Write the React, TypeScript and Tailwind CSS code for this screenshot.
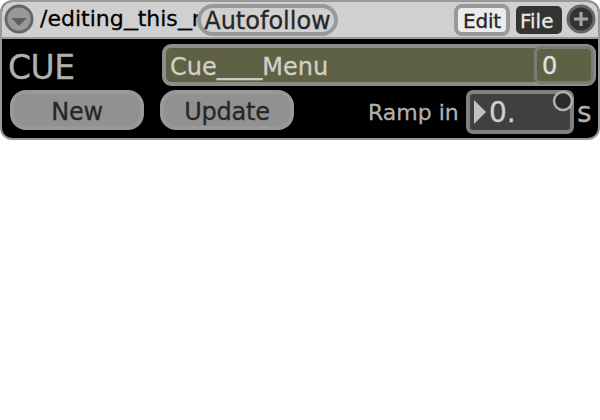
import React from 'react';

function WideUnderscore({ className }: { className: string }) {
  return <span className={`inline-block origin-left scale-x-[1.27] ${className}`}>_</span>;
}

function Header() {
  return (
    <header className="flex h-[37px] shrink-0 items-start border-b-2 border-[#999999] bg-[#d0d0d0] pt-[2px]">
      <svg className="ml-[2px] h-[30px] w-[30px] shrink-0" viewBox="0 0 30 30">
        <circle cx="15" cy="15" r="13" fill="#999999" stroke="#666666" strokeWidth="3" />
        <path d="M7.3 14H22.7L15 22Z" fill="#5f5f5f" />
      </svg>
      <div className="ml-[6px] mt-[2px] h-[28px] w-[159px] shrink-0 overflow-hidden whitespace-nowrap text-[22px] leading-[26px] text-black">
        /editing<WideUnderscore className="w-[14px] -translate-y-px" />this<WideUnderscore className="w-[14px] -translate-y-px" />n
      </div>
      <div className="relative -ml-[2px] flex h-[32px] w-[141px] shrink-0 items-center justify-center rounded-full border-4 border-[#999999] bg-[#d0d0d0] pt-[2px] text-[24px] leading-none text-[#262626]">
        Autofollow
      </div>
      <div className="ml-auto flex shrink-0 items-start">
        <div className="flex h-[32px] w-[56px] items-center justify-center rounded-lg border-4 border-[#999999] bg-[#ececec] pt-px text-[20px] leading-none tracking-[-0.2px] text-[#262626]">Edit</div>
        <div className="ml-[6px] mt-[2px] flex h-[28px] w-[46px] items-center rounded-[5px] bg-[#333333] pl-[4px] pt-[2px] text-[20px] leading-none text-[#e8e8e8]">File</div>
        <svg className="ml-[4px] mr-[2px] h-[30px] w-[30px]" viewBox="0 0 30 30">
          <circle cx="15" cy="15" r="13" fill="#333333" stroke="#666666" strokeWidth="3" />
          <path d="M15 8V22M8 15H22" stroke="#a3a3a3" strokeWidth="3.2" />
        </svg>
      </div>
    </header>
  );
}

export default function App() {
  return (
    <main className="h-[420px] w-[600px] overflow-hidden bg-white font-['DejaVu_Sans',sans-serif] [-webkit-text-stroke:0.3px_currentColor]">
      <section className="flex h-[140px] w-[600px] flex-col overflow-hidden rounded-xl border-2 border-[#999999] bg-black">
        <Header />
        <div className="flex h-[51px] shrink-0 pt-[5px]">
          <div className="w-[160px] shrink-0 pl-[6px] pt-[6px] text-[33px] leading-[35px] tracking-[-0.5px] text-[#b0b0b0]">CUE</div>
          <div className="flex h-[42px] w-[434px] rounded-[9px] border-4 border-[#8c8c88] bg-[#5e6144]">
            <div className="flex-1 whitespace-nowrap pl-[4px] pt-[5px] text-[24px] leading-[28px] text-[#d0d0c8]">
              Cue<WideUnderscore className="w-[15.2px] -translate-y-px" /><WideUnderscore className="w-[15.2px] -translate-y-px" /><WideUnderscore className="w-[15.2px] -translate-y-px" />Menu
            </div>
            <div className="mr-[-2px] mt-[-2px] h-[38px] w-[60px] rounded-[7px] border-[3px] border-[#7c7c70] pl-[5px] pt-[3px] text-[24px] leading-[28px] text-[#e0e0e0]">0</div>
          </div>
        </div>
        <div className="flex h-[50px] shrink-0 items-start pl-2">
          <div className="flex h-[40px] w-[134px] shrink-0 items-center justify-center rounded-[16px] border-4 border-[#999999] bg-[#919191] pt-[3px] text-[24px] tracking-[-0.2px] text-[#262626]">New</div>
          <div className="ml-4 flex h-[40px] w-[134px] shrink-0 items-center justify-center rounded-[16px] border-4 border-[#999999] bg-[#919191] pt-[3px] text-[24px] tracking-[-0.2px] text-[#262626]">Update</div>
          <div className="ml-[74px] w-[98px] shrink-0 whitespace-nowrap pt-[9px] text-[22px] leading-[28px] text-[#b0b0b0]">Ramp in</div>
          <div className="relative flex h-[44px] w-[108px] shrink-0 rounded-[7px] border-4 border-[#808080] bg-[#404040]">
            <svg className="ml-[4px] mt-[6px] h-[24px] w-[12px]" viewBox="0 0 12 24"><path d="M0 0L12 12L0 24Z" fill="#c0c0c0" /></svg>
            <div className="ml-[3px] pt-[4px] text-[28px] leading-[30px] text-[#d0d0d0]">0.</div>
            <svg className="absolute right-[-4px] top-[-4px] h-[22px] w-[22px]" viewBox="0 0 22 22"><circle cx="11" cy="11" r="9" fill="#2b2b2b" stroke="#b0b0b0" strokeWidth="2.5" /></svg>
          </div>
          <div className="ml-[3px] pt-[7px] text-[28px] leading-[32px] text-[#b0b0b0]">s</div>
        </div>
      </section>
    </main>
  );
}
